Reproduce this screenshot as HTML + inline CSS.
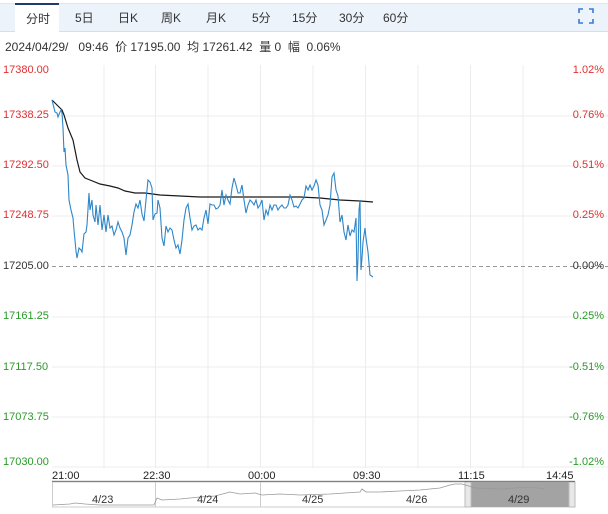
<!DOCTYPE html>
<html><head><meta charset="utf-8"><style>
*{margin:0;padding:0;box-sizing:border-box}
body{width:608px;height:514px;background:#fff;font-family:"Liberation Sans","Noto Sans CJK SC",sans-serif;position:relative;overflow:hidden;color:#333}
.tabs{position:absolute;left:0;top:3px;width:608px;height:29px;background:#edf3fb;border-top:1px solid #dfe6ef;border-bottom:1px solid #d5dfec}
.tab{position:absolute;top:6px;font-size:12px;color:#333}
.active{position:absolute;left:15px;top:3px;width:44px;height:29px;background:#fff;border-top:2px solid #1e3a6e}
.info{position:absolute;left:5px;top:38px;font-size:12px;color:#333;white-space:pre}
.l{position:absolute;font-size:11px;left:3px}
.r{position:absolute;font-size:11px;right:4px;text-align:right}
.t{position:absolute;top:470px;font-size:11px;color:#222}
</style></head><body>
<div class="tabs"></div>
<div class="active"></div>
<div class="tab" style="left:26px;top:10px">分时</div>
<div class="tab" style="left:75px;top:9px">5日</div>
<div class="tab" style="left:118px;top:9px">日K</div>
<div class="tab" style="left:161px;top:9px">周K</div>
<div class="tab" style="left:206px;top:9px">月K</div>
<div class="tab" style="left:252px;top:9px">5分</div>
<div class="tab" style="left:292px;top:9px">15分</div>
<div class="tab" style="left:339px;top:9px">30分</div>
<div class="tab" style="left:383px;top:9px">60分</div>
<svg style="position:absolute;left:578px;top:8px" width="16" height="16"><path d="M1 5V1H5M11 1H15V5M15 11V15H11M5 15H1V11" fill="none" stroke="#3a7bd5" stroke-width="1.6"/></svg>
<div class="info">2024/04/29/   09:46  价 17195.00  均 17261.42  量 0  幅  0.06%</div>
<svg style="position:absolute;left:0;top:0" width="608" height="514">
<g stroke="#ececec" stroke-width="1">
<line x1="52" y1="116" x2="608" y2="116"/><line x1="52" y1="166" x2="608" y2="166"/><line x1="52" y1="216" x2="608" y2="216"/>
<line x1="52" y1="317" x2="608" y2="317"/><line x1="52" y1="367" x2="608" y2="367"/><line x1="52" y1="417" x2="608" y2="417"/><line x1="52" y1="467" x2="608" y2="467"/>
<line x1="104" y1="65" x2="104" y2="468"/><line x1="155.5" y1="65" x2="155.5" y2="468"/><line x1="208" y1="65" x2="208" y2="468"/><line x1="260.5" y1="65" x2="260.5" y2="468"/><line x1="313" y1="65" x2="313" y2="468"/><line x1="365.5" y1="65" x2="365.5" y2="468"/><line x1="418" y1="65" x2="418" y2="468"/><line x1="470.5" y1="65" x2="470.5" y2="468"/><line x1="523" y1="65" x2="523" y2="468"/>
</g>
<line x1="52" y1="266.5" x2="608" y2="266.5" stroke="#999" stroke-dasharray="4,3"/>
<polyline fill="none" stroke="#1a1a1a" stroke-width="1.2" points="52,100 56,104 60,108 62,110 64,115 68,128 73,140 75,150 77,160 80,172 85,178 90,180 100,184 110,186 118,188 125,191 135,193 145,193 160,195 180,196 200,197 230,197 260,197 300,197 320,198 340,200 360,201 373,202"/>
<polyline fill="none" stroke="#2e86c8" stroke-width="1.1" points="52,100 54,108 55,112 57,113 58,117 60,112 61,110 62,113 63,128 64,152 65,148 66,165 68,175 69,200 71,210 73,218 74,230 76,251 77,258 79,248 81,250 82,252 84,234 86,232 87,225 89,193 90,210 92,200 93,215 95,222 96,205 98,225 100,205 102,230 104,215 106,232 108,215 110,228 112,226 114,235 116,230 118,222 120,228 122,232 124,238 126,255 128,238 130,235 132,225 134,212 136,204 138,208 140,200 142,214 144,221 146,200 148,180 150,182 152,188 153,220 155,214 157,213 158,200 160,208 162,238 164,246 166,226 168,232 170,228 172,230 174,240 176,248 178,245 180,254 182,240 184,220 186,208 188,204 190,218 192,230 194,226 196,225 198,230 200,228 202,230 204,218 206,210 208,224 210,204 212,205 214,205 216,209 218,208 220,205 222,190 224,205 226,195 228,200 230,204 232,188 234,178 236,185 238,193 240,193 242,185 244,200 246,213 248,205 250,200 252,202 254,205 256,200 258,208 260,205 262,200 264,220 266,210 268,215 270,205 272,210 274,205 276,205 278,210 280,207 282,205 284,208 286,208 288,205 290,195 292,200 294,207 296,206 298,208 300,204 302,200 304,198 306,186 308,190 310,185 312,190 314,186 316,180 318,185 320,205 322,210 324,225 326,220 328,215 330,205 332,177 334,173 336,190 338,196 340,222 342,215 344,232 346,240 348,225 350,236 352,230 354,232 356,218 357,281 358,258 359,210 360,200 361,270 362,258 363,242 365,228 366,238 368,252 370,275 373,277"/>
<line x1="52" y1="481.5" x2="575" y2="481.5" stroke="#333" stroke-width="1.2"/>
<rect x="52.5" y="482" width="522" height="25" fill="none" stroke="#ccc"/>
<line x1="155.5" y1="482" x2="155.5" y2="507" stroke="#ccc"/><line x1="260.5" y1="482" x2="260.5" y2="507" stroke="#ccc"/>
<rect x="465" y="482" width="110" height="25" fill="#a3a3a3"/>
<rect x="465" y="482" width="6" height="25" fill="#e8e8e8" stroke="#bbb"/><rect x="569" y="482" width="6" height="25" fill="#e8e8e8" stroke="#bbb"/>
<polyline fill="none" stroke="#999" stroke-width="0.8" points="53,505 70,504 75,503 85,504 100,505 130,505 154,505 157,498 162,500 180,499 200,497 215,496 230,492 240,494 255,493 262,495 280,494 300,495 330,494 360,492 362,489 366,492 380,492 400,491 420,490 440,488 450,485 455,484 462,484 475,488 500,489 530,487 545,489"/>
<g font-family="Liberation Sans,sans-serif" font-size="11" fill="#333"><text x="92" y="503">4/23</text><text x="197" y="503">4/24</text><text x="302" y="503">4/25</text><text x="406" y="503">4/26</text><text x="508" y="503">4/29</text></g>
</svg>
<div class="l" style="top:64px;color:#e03030">17380.00</div>
<div class="l" style="top:109px;color:#e03030">17338.25</div>
<div class="l" style="top:159px;color:#e03030">17292.50</div>
<div class="l" style="top:209px;color:#e03030">17248.75</div>
<div class="l" style="top:260px;color:#333">17205.00</div>
<div class="l" style="top:310px;color:#2a9a2a">17161.25</div>
<div class="l" style="top:361px;color:#2a9a2a">17117.50</div>
<div class="l" style="top:411px;color:#2a9a2a">17073.75</div>
<div class="l" style="top:456px;color:#2a9a2a">17030.00</div>
<div class="r" style="top:64px;color:#e03030">1.02%</div>
<div class="r" style="top:109px;color:#e03030">0.76%</div>
<div class="r" style="top:159px;color:#e03030">0.51%</div>
<div class="r" style="top:209px;color:#e03030">0.25%</div>
<div class="r" style="top:260px;color:#333">0.00%</div>
<div class="r" style="top:310px;color:#2a9a2a">0.25%</div>
<div class="r" style="top:361px;color:#2a9a2a">-0.51%</div>
<div class="r" style="top:411px;color:#2a9a2a">-0.76%</div>
<div class="r" style="top:456px;color:#2a9a2a">-1.02%</div>
<div class="t" style="left:52px">21:00</div>
<div class="t" style="left:143px">22:30</div>
<div class="t" style="left:248px">00:00</div>
<div class="t" style="left:353px">09:30</div>
<div class="t" style="left:458px">11:15</div>
<div class="t" style="left:546px">14:45</div>
</body></html>
